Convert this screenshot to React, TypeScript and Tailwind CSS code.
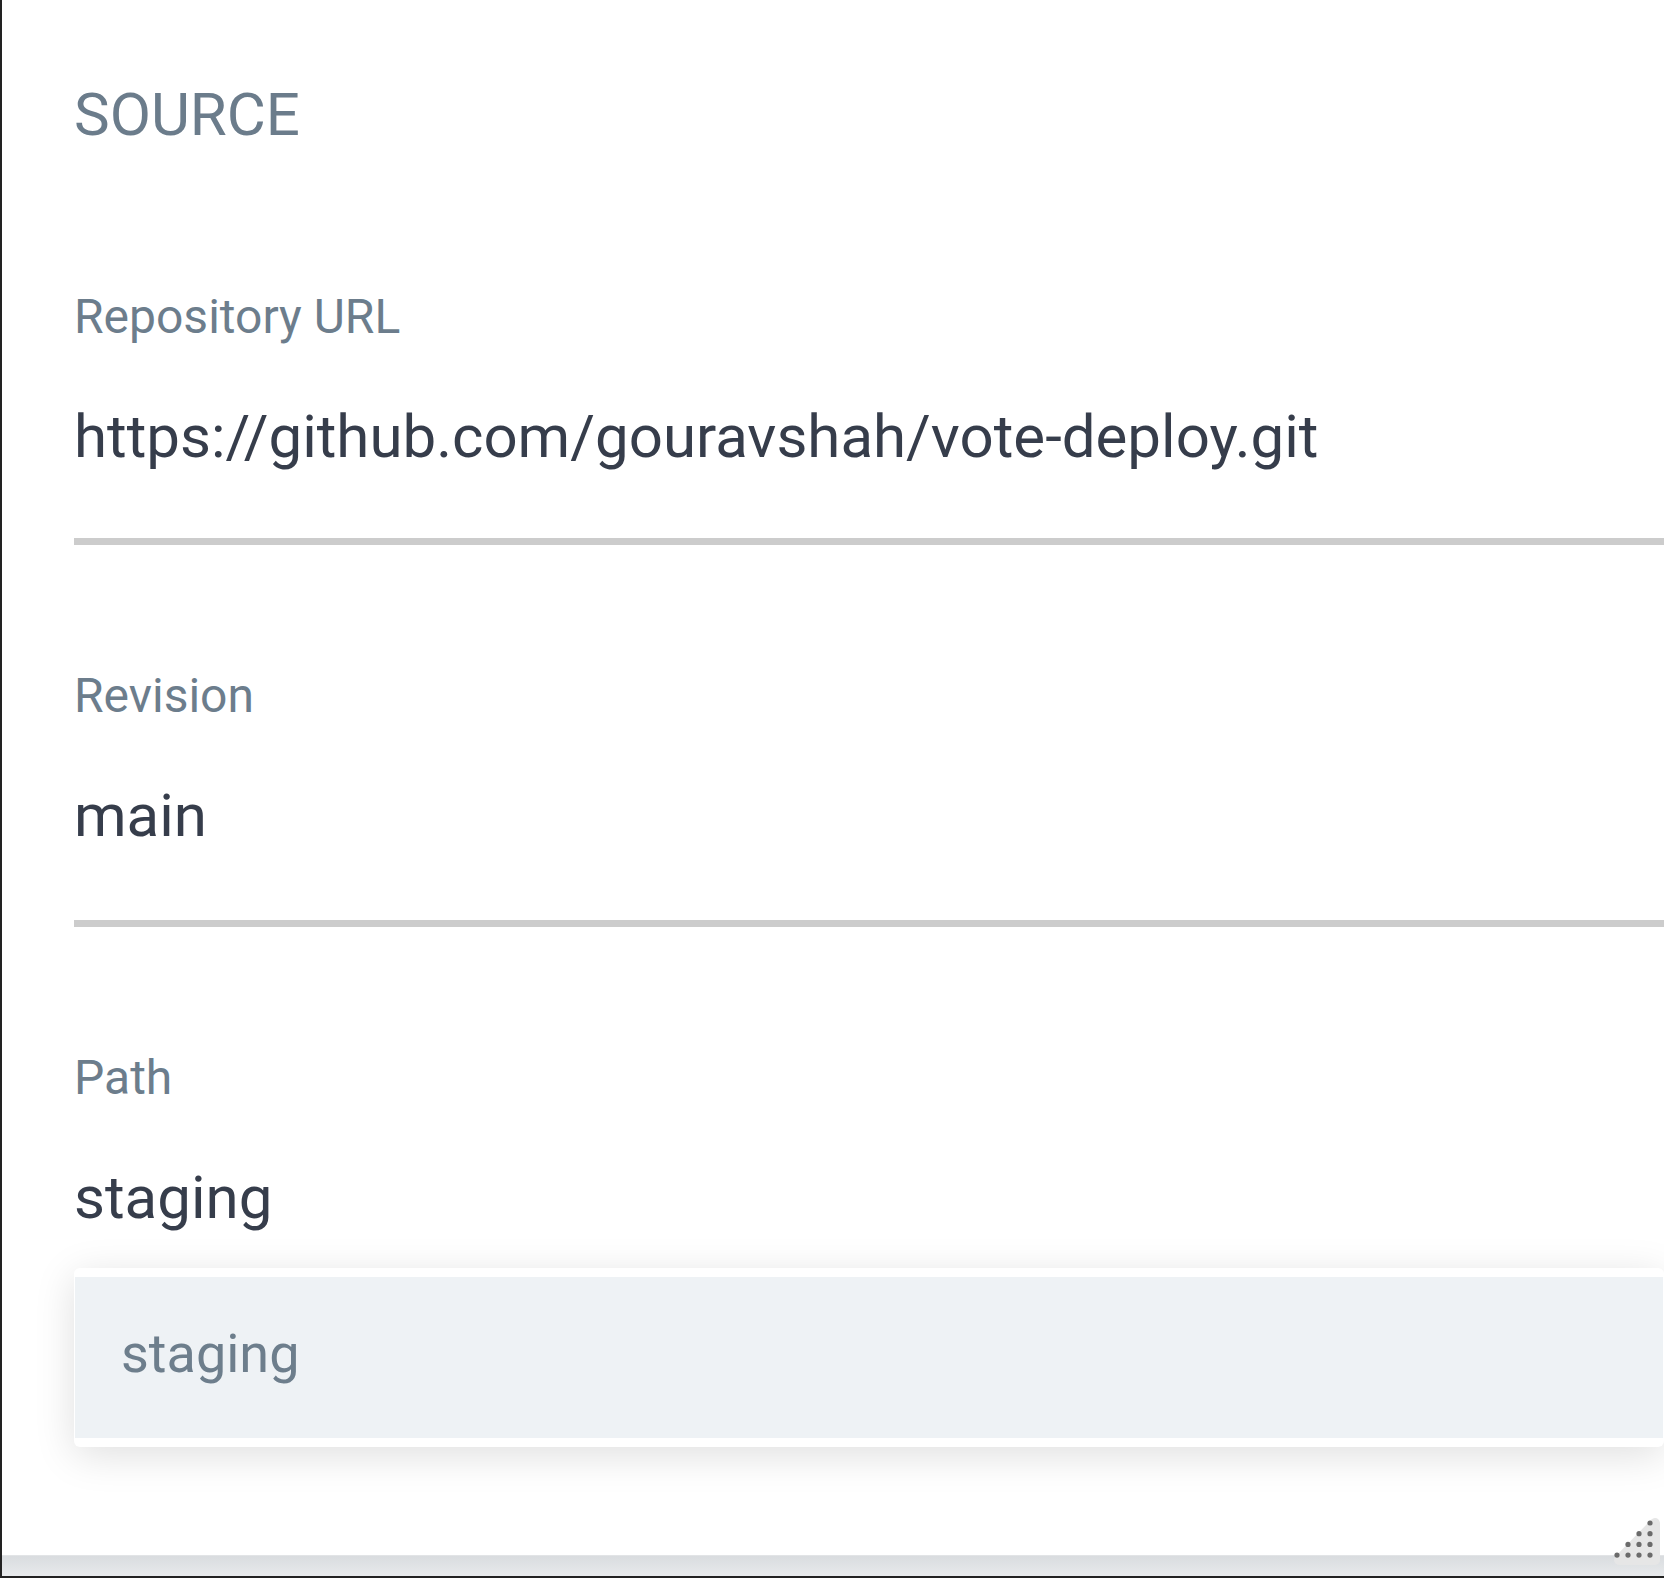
import React from 'react';

interface Field {
  label: string;
  value: string;
  underlineGap?: string;
}

const fields: Field[] = [
  { label: 'Repository URL', value: 'https://github.com/gouravshah/vote-deploy.git', underlineGap: 'mt-[66px]' },
  { label: 'Revision', value: 'main', underlineGap: 'mt-[69px]' },
  { label: 'Path', value: 'staging' },
];

function ResizeGrip() {
  const xs = [13, 24, 35, 46];
  const dots: { x: number; y: number }[] = [];
  // rows from top: 1, 2, 3, 4 dots, right aligned
  for (let row = 0; row < 4; row++) {
    for (let i = 3 - row; i < 4; i++) {
      dots.push({ x: xs[i], y: 13 + row * 10.7 });
    }
  }
  return (
    <svg
      className="absolute right-0 bottom-[10px]"
      width={60}
      height={58}
      viewBox="0 0 60 58"
    >
      <polygon
        points="15,50 51,13 51,50"
        fill="#e6e6e6"
        stroke="#e6e6e6"
        strokeWidth={10}
        strokeLinejoin="round"
      />
      {dots.map((d, i) => (
        <circle key={i} cx={d.x} cy={d.y} r={2.6} fill="#6b6b6b" />
      ))}
    </svg>
  );
}

export default function App() {
  return (
    <div
      className="relative h-[1578px] w-full bg-[#222222] pl-[2px] pb-[2px] flex flex-col overflow-hidden"
      style={{ fontFamily: 'Roboto, "Noto Sans", sans-serif' }}
    >
      <div className="flex-1 bg-white pl-[72px] pt-[85px]">
        <div className="text-[60px] leading-[60px] text-[#6b7c8b] uppercase">Source</div>

        {fields.map((f, idx) => (
          <div key={f.label} className={idx === 0 ? 'mt-[144px]' : 'mt-[123px]'}>
            <div className="text-[48px] leading-[56px] text-[#6c7d8c]">{f.label}</div>
            <div className="mt-[57px] text-[60px] leading-[70px] text-[#363d4b]">{f.value}</div>
            {f.underlineGap && <div className={`${f.underlineGap} h-[7px] bg-[#cccccc]`} />}
          </div>
        ))}

        {/* autocomplete dropdown */}
        <div className="mt-[35px] rounded-[6px] bg-white px-[1px] py-[9px] shadow-[0_8px_40px_rgba(0,0,0,0.13)]">
          <div className="h-[161px] bg-[#eef2f5] pl-[46px] pt-[45px]">
            <div className="text-[54px] leading-[64px] text-[#6d7e8c]">staging</div>
          </div>
        </div>
      </div>

      {/* bottom bar */}
      <div className="h-[21px] border-t border-[#e2e4e6] bg-gradient-to-b from-[#d9dcdf] to-[#e8eaec]" />

      <ResizeGrip />
    </div>
  );
}
